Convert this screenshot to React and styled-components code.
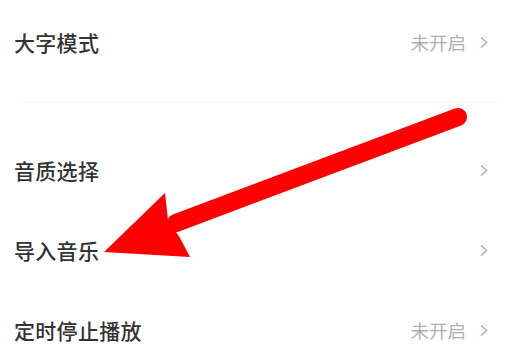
import React from 'react';
import styled, { createGlobalStyle } from 'styled-components';

const GlobalStyle = createGlobalStyle`
  html, body {
    margin: 0;
    padding: 0;
    background: #ffffff;
  }
  body {
    font-family: "Noto Sans CJK SC", "Noto Sans", sans-serif;
  }
`;

const settings = [
  { group: 1, title: '大字模式', value: '未开启' },
  { group: 2, title: '音质选择' },
  { group: 2, title: '导入音乐' },
  { group: 2, title: '定时停止播放', value: '未开启' },
];

function Chevron() {
  return (
    <svg width="10" height="13" viewBox="0 0 10 13">
      <path d="M2.5 1.8 L7.6 6.5 L2.5 11.2" fill="none" stroke="#bdbdbd" strokeWidth="1.7" strokeLinecap="round" strokeLinejoin="round" />
    </svg>
  );
}

function Arrow() {
  return (
    <ArrowLayer viewBox="0 0 520 354" width="520" height="354">
      <line x1="458" y1="117" x2="176" y2="223" stroke="#ff0000" strokeWidth="18" strokeLinecap="round" />
      <polygon points="104,252 165,193 168,220 180,238 190,257" fill="#ff0000" />
    </ArrowLayer>
  );
}

export default function App() {
  return (
    <>
      <GlobalStyle />
      <Page>
        <List>
          {settings.map((item, i) => (
            <React.Fragment key={item.title}>
              {i > 0 && settings[i - 1].group !== item.group && <Divider />}
              <Row>
                <Title>{item.title}</Title>
                <Right>
                  {item.value && <Value>{item.value}</Value>}
                  <Chevron />
                </Right>
              </Row>
            </React.Fragment>
          ))}
        </List>
        <Arrow />
      </Page>
    </>
  );
}

const Page = styled.div`
  position: relative;
  width: 520px;
  height: 354px;
  overflow: hidden;
  background: #ffffff;
`;

const List = styled.div`
  display: flex;
  flex-direction: column;
  padding-top: 2px;
`;

const Row = styled.div`
  display: flex;
  align-items: center;
  justify-content: space-between;
  height: 80px;
  flex-shrink: 0;
  padding: 0 31px 0 14px;
`;

const Title = styled.div`
  font-size: 21px;
  font-weight: 500;
  color: #333333;
  letter-spacing: 0.3px;
`;

const Right = styled.div`
  display: flex;
  align-items: center;
  gap: 13px;
`;

const Value = styled.span`
  font-size: 18.5px;
  color: #b0b0b0;
`;

const Divider = styled.div`
  height: 1px;
  margin: 20px 18px 27px;
  background: #f7f7f7;
  flex-shrink: 0;
`;

const ArrowLayer = styled.svg`
  position: absolute;
  left: 0;
  top: 0;
  pointer-events: none;
`;
